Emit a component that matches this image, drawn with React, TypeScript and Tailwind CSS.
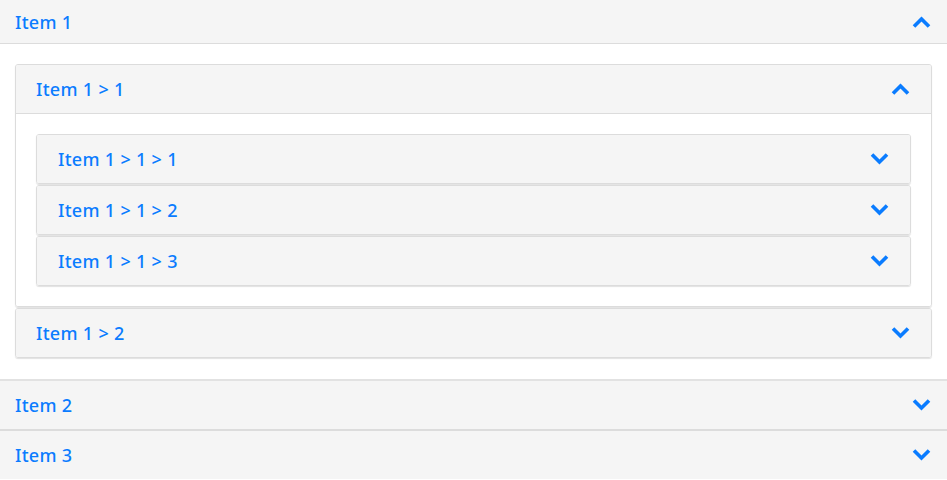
import { ReactNode } from "react";

const Chevron = ({ up }: { up?: boolean }) => (
  <svg width="19" height="12" viewBox="0 0 19 12" className="shrink-0">
    <polyline
      points={up ? "2,10.5 9.5,3 17,10.5" : "2,1.5 9.5,9 17,1.5"}
      fill="none"
      stroke="#0a7cff"
      strokeWidth="3.6"
      strokeLinejoin="miter"
    />
  </svg>
);

interface HeaderProps {
  label: string;
  open?: boolean;
  className?: string;
}

const Header = ({ label, open, className = "" }: HeaderProps) => (
  <div className={`flex items-center justify-between bg-[#f5f5f5] text-[#0a7cff] ${className}`}>
    <span className="text-[18px] font-medium tracking-[0.3px] leading-none">{label}</span>
    <Chevron up={open} />
  </div>
);

const Card = ({ children, className = "" }: { children: ReactNode; className?: string }) => (
  <div className={`rounded-[3px] border border-[#dcdcdc] shadow-[0_1px_1px_rgba(0,0,0,0.12)] overflow-hidden ${className}`}>
    {children}
  </div>
);

export default function App() {
  const inner = ["Item 1 > 1 > 1", "Item 1 > 1 > 2", "Item 1 > 1 > 3"];

  return (
    <div className="w-[947px] h-[480px] overflow-hidden bg-white font-['Noto_Sans',sans-serif]">
      <Header label="Item 1" open className="h-[44px] pl-[15px] pr-[16px] border-b border-[#dcdcdc]" />
      <div className="pt-[20px] pb-[21px] px-[15px] flex flex-col gap-px">
        <Card>
          <Header label="Item 1 > 1" open className="h-[49px] pl-[20px] pr-[21px] border-b border-[#dcdcdc]" />
          <div className="p-[20px] bg-white flex flex-col gap-px">
            {inner.map((label) => (
              <Card key={label}>
                <Header label={label} className="h-[48px] pl-[21px] pr-[21px]" />
              </Card>
            ))}
          </div>
        </Card>
        <Card>
          <Header label="Item 1 > 2" className="h-[48px] pl-[20px] pr-[21px]" />
        </Card>
      </div>
      <div className="border-t-2 border-[#e2e2e2]">
        <Header label="Item 2" className="h-[48px] pl-[15px] pr-[16px]" />
      </div>
      <div className="border-t-2 border-[#dcdcdc]">
        <Header label="Item 3" className="h-[48px] pl-[15px] pr-[16px]" />
      </div>
    </div>
  );
}
